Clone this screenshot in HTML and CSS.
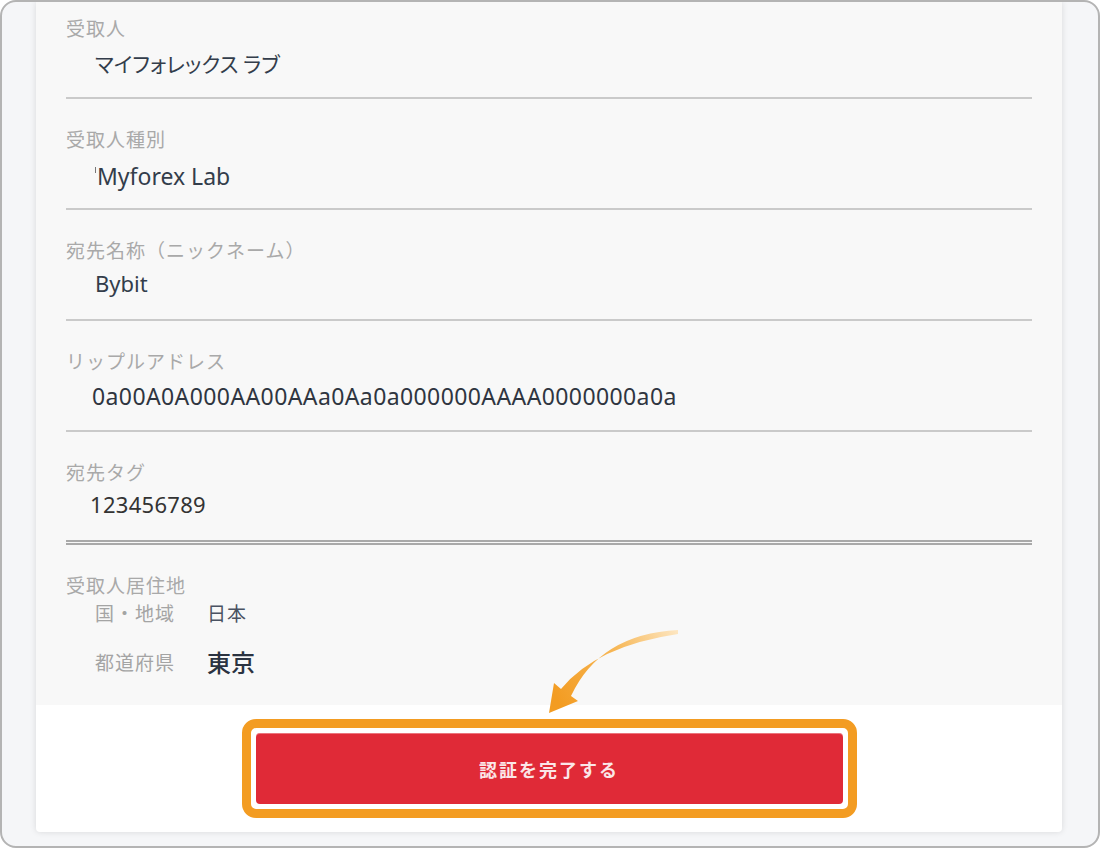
FILE: index.html
```html
<!DOCTYPE html>
<html lang="ja">

<head>
    <meta charset="UTF-8">
    <meta name="viewport" content="width=device-width, initial-scale=1.0">
    <title>受取人確認</title>
    <link rel="stylesheet" href="styles.css">
</head>

<body>
    <div class="frame">
        <div class="card">
            <div class="info">
                <div class="field">
                    <div class="label">受取人</div>
                    <div class="value value-kana">マイフォレックス ラブ</div>
                </div>
                <div class="field">
                    <div class="label">受取人種別</div>
                    <div class="value value-type"><span class="caret"></span>Myforex Lab</div>
                </div>
                <div class="field">
                    <div class="label">宛先名称（ニックネーム）</div>
                    <div class="value value-nick">Bybit</div>
                </div>
                <div class="field">
                    <div class="label">リップルアドレス</div>
                    <div class="value value-address">0a00A0A000AA00AAa0Aa0a000000AAAA0000000a0a</div>
                </div>
                <div class="field field-double">
                    <div class="label">宛先タグ</div>
                    <div class="value value-tag">123456789</div>
                </div>
                <div class="residence">
                    <div class="label">受取人居住地</div>
                    <dl class="residence-list">
                        <dt>国・地域</dt>
                        <dd>日本</dd>
                        <dt>都道府県</dt>
                        <dd class="pref">東京</dd>
                    </dl>
                </div>
            </div>
            <div class="action">
                <div class="highlight">
                    <button class="submit" type="button">認証を完了する</button>
                </div>
            </div>
        </div>

        <!-- 矢印 -->
        <svg class="arrow" width="150" height="100" viewBox="540 620 150 100">
            <defs>
                <linearGradient id="arrowfill" gradientUnits="userSpaceOnUse" x1="680" y1="630" x2="560" y2="705">
                    <stop offset="0" stop-color="#fde8c6" />
                    <stop offset="0.45" stop-color="#f7b858" />
                    <stop offset="1" stop-color="#f39c22" />
                </linearGradient>
            </defs>
            <path d="M678 630 Q600 634 571 696 L578 701 L549 713 L554 683 L561 689 Q596 646 678 634 Z" fill="url(#arrowfill)" />
        </svg>
    </div>
</body>

</html>
```

FILE: styles.css
```css
* {
    margin: 0px;
    padding: 0px;
    box-sizing: border-box;
}

body {
    background: #fff;
    font-family: "Noto Sans", "Noto Sans CJK JP", sans-serif;
}

.frame {
    position: relative;
    width: 1100px;
    height: 848px;
    border: 2px solid #b4b4b4;
    border-radius: 16px;
    background: #f5f6f8;
    overflow: hidden;
}

.card {
    display: flex;
    flex-direction: column;
    width: 1026px;
    height: 830px;
    margin-left: 34px;
    background: #fff;
    border-radius: 0 0 4px 4px;
    box-shadow: 0 0 6px rgba(0, 0, 0, 0.12);
}

.info {
    height: 703px;
    padding: 0 30px;
    background: #f8f8f8;
}

.field {
    padding: 28px 0 17px;
    border-bottom: 2px solid #cacaca;
}

.field:first-child {
    padding-top: 14px;
}

.field-double {
    padding-bottom: 21px;
    border-bottom: 5px double #a9a9a9;
}

.label {
    font-family: "Noto Sans CJK JP", sans-serif;
    font-size: 19px;
    line-height: 24px;
    letter-spacing: 1px;
    color: #a9a9a9;
}

.value {
    margin-top: 10px;
    padding-left: 29px;
    font-size: 22px;
    line-height: 30px;
    color: #333d4b;
}

.value-kana {
    margin-top: 8px;
    margin-bottom: 2px;
    font-family: "Noto Sans CJK JP", sans-serif;
    font-size: 21px;
    font-feature-settings: "palt";
}

.value-type {
    padding-left: 31px;
    font-size: 23px;
}

.caret {
    display: inline-block;
    width: 1px;
    height: 6px;
    margin: 0 1px 0 -2px;
    vertical-align: 12px;
    background: #777;
}

.value-nick {
    margin-top: 6px;
    margin-bottom: 4px;
}

.value-address {
    margin-top: 8px;
    margin-bottom: 2px;
    padding-left: 26px;
    font-size: 23px;
    letter-spacing: 0.4px;
    color: #2f3540;
}

.value-tag {
    margin-top: 5px;
    padding-left: 24px;
    letter-spacing: 0.3px;
    color: #333;
}

.residence {
    padding-top: 28px;
}

.residence-list {
    display: grid;
    grid-template-columns: 112px 1fr;
    row-gap: 21px;
    margin-top: 2px;
    padding-left: 29px;
    font-family: "Noto Sans CJK JP", sans-serif;
    line-height: 28px;
}

.residence-list dt {
    font-size: 19px;
    letter-spacing: 1px;
    color: #a4a4a4;
}

.residence-list dd {
    font-size: 19px;
    letter-spacing: 1px;
    color: #4a5262;
}

.residence-list dd.pref {
    font-size: 24px;
    font-weight: 500;
    letter-spacing: 0;
    color: #2b3341;
}

.action {
    flex: 1;
    padding-top: 14px;
}

.highlight {
    width: 615px;
    height: 99px;
    margin: 0 auto;
    padding: 5px;
    border: 9px solid #f39c22;
    border-radius: 14px;
    background: #fff;
}

.submit {
    display: block;
    width: 100%;
    height: 100%;
    border: none;
    border-radius: 4px;
    background: #e02a37;
    box-shadow: inset 0 1px 0 rgba(255, 255, 255, 0.35);
    font-family: "Noto Sans CJK JP", sans-serif;
    font-size: 18px;
    font-weight: bold;
    letter-spacing: 2px;
    color: #fbe6e8;
    cursor: pointer;
}

.arrow {
    position: absolute;
    left: 538px;
    top: 618px;
    pointer-events: none;
}
```
